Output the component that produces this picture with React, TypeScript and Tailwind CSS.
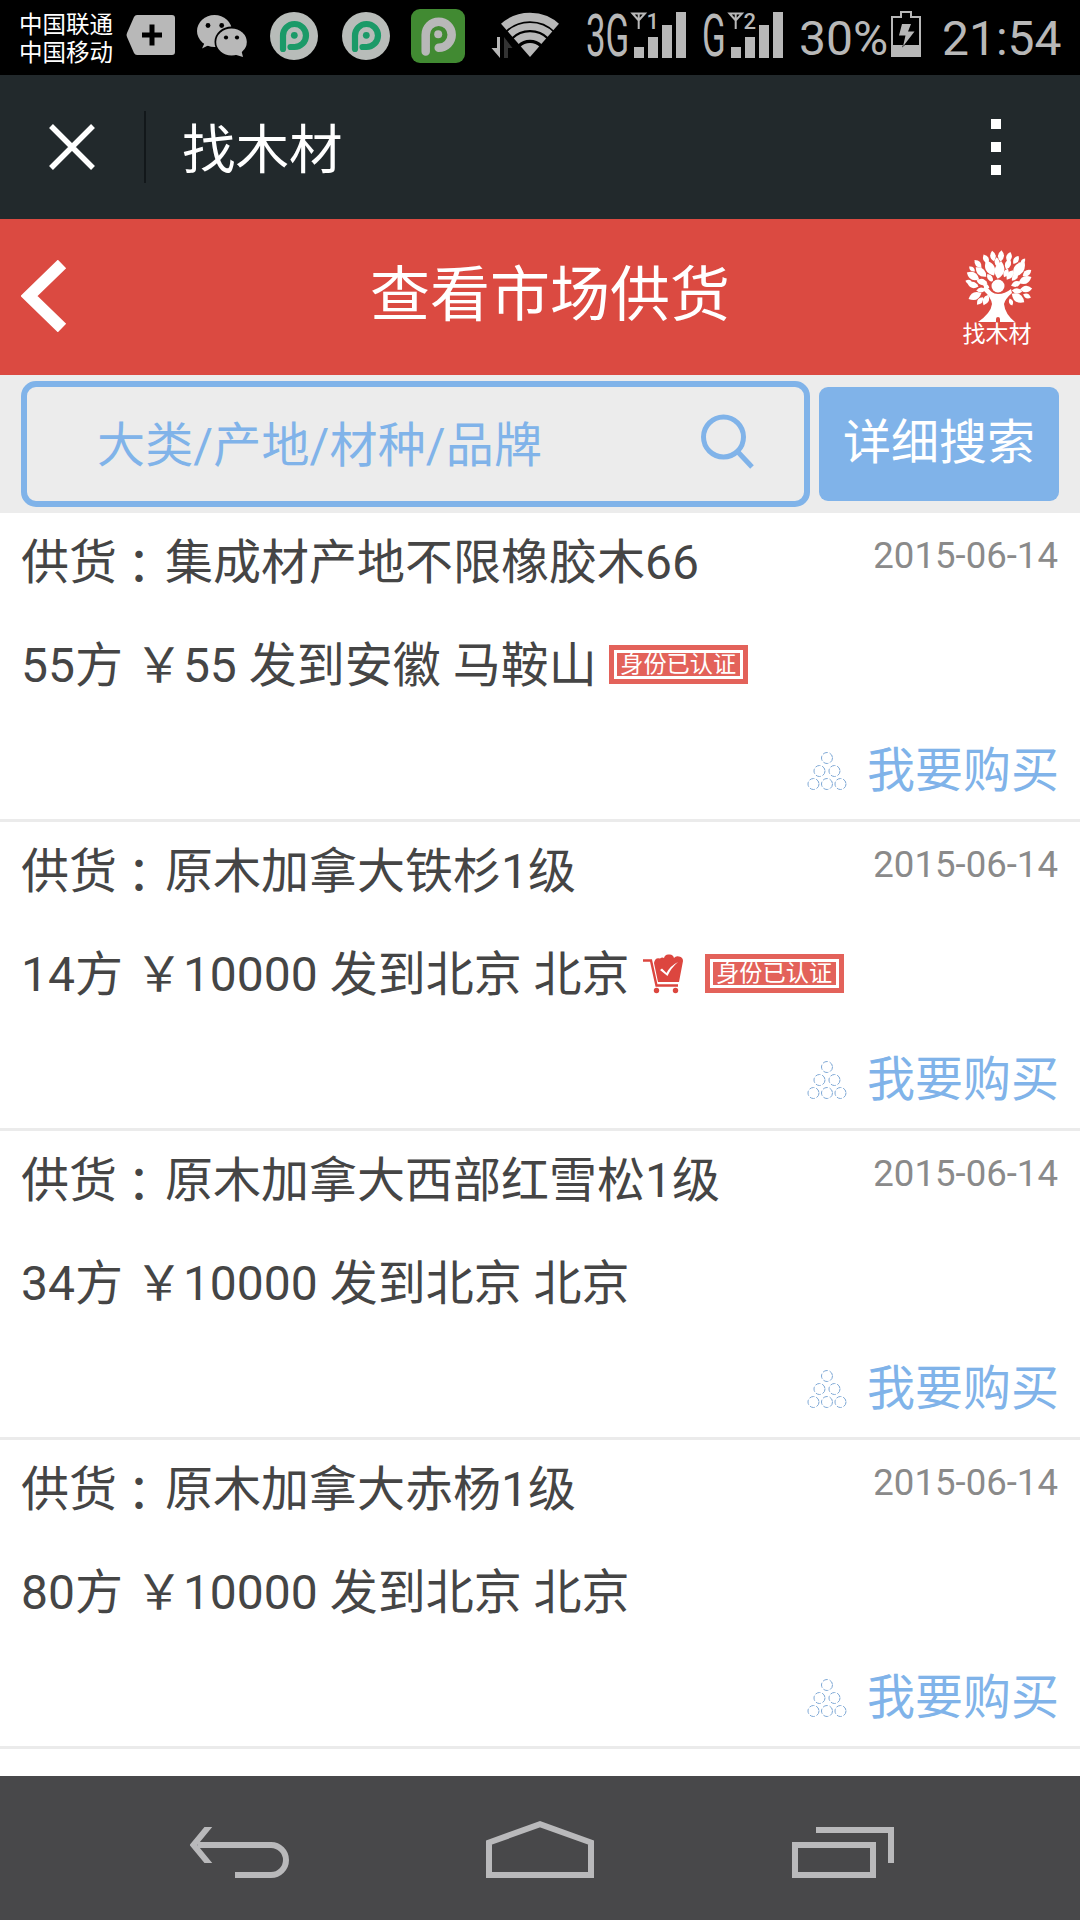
import React from "react";

type Supply = {
  title: string;
  volume: string;
  price: string;
  place: string;
  cart?: boolean;
  verified?: boolean;
};

const supplies: Supply[] = [
  { title: "集成材产地不限橡胶木66", volume: "55方", price: "55", place: "发到安徽 马鞍山", verified: true },
  { title: "原木加拿大铁杉1级", volume: "14方", price: "10000", place: "发到北京 北京", cart: true, verified: true },
  { title: "原木加拿大西部红雪松1级", volume: "34方", price: "10000", place: "发到北京 北京" },
  { title: "原木加拿大赤杨1级", volume: "80方", price: "10000", place: "发到北京 北京" },
];

function TagPlus() {
  return (
    <svg width="50" height="42" viewBox="0 0 50 42" className="ml-[11px]">
      <path d="M11 1H46a3 3 0 0 1 3 3V38a3 3 0 0 1-3 3H11Q9 41 8 39L1 23Q0 21 1 19L8 3Q9 1 11 1Z" fill="#b8b8b8" />
      <path d="M26 10.500V31.500M16 21H36" stroke="#000" strokeWidth="5" />
    </svg>
  );
}

function WeChat() {
  return (
    <svg width="52" height="44" viewBox="0 0 52 44" className="ml-[20px]">
      <g fill="#b8b8b8">
        <ellipse cx="18.500" cy="17" rx="17.500" ry="16" />
        <path d="M9 28 6 34.500 15 30Z" />
        <ellipse cx="35.500" cy="28" rx="17" ry="15.500" fill="#000" />
        <ellipse cx="35.500" cy="28" rx="15.300" ry="13.500" />
        <path d="M37 40 47 43 45 35Z" />
      </g>
      <g fill="#000">
        <circle cx="12" cy="11.500" r="2.400" />
        <circle cx="25.700" cy="11.500" r="2.400" />
        <circle cx="30" cy="23.500" r="2.100" />
        <circle cx="41" cy="23.500" r="2.100" />
      </g>
    </svg>
  );
}

function PCircle() {
  return (
    <svg width="48" height="48" viewBox="0 0 48 48">
      <circle cx="24" cy="24" r="24" fill="#b8bcb9" />
      <path d="M13 37V23.500A11.500 11.500 0 1 1 24.500 35H20.500" fill="none" stroke="#1b9a68" strokeWidth="6.200" strokeLinecap="round" />
      <circle cx="24.300" cy="23.300" r="3.400" fill="#1b9a68" />
    </svg>
  );
}

function PSquare() {
  return (
    <svg width="54" height="54" viewBox="0 0 54 54" className="ml-[21px]">
      <rect width="54" height="54" rx="9" fill="#418a32" />
      <path d="M14.700 42.500V25.700A13 13 0 1 1 27.700 38.700" fill="none" stroke="#b8b8b8" strokeWidth="8.500" strokeLinecap="round" />
      <circle cx="27.200" cy="25.200" r="4" fill="#b8b8b8" />
    </svg>
  );
}

function Wifi() {
  return (
    <svg width="70" height="46" viewBox="0 0 70 46" className="ml-[26px]">
      <defs>
        <clipPath id="fan">
          <path d="M39 45 8.500 10 0-1V-10H78V-1L69.500 10Z" />
        </clipPath>
      </defs>
      <g clipPath="url(#fan)" fill="none" stroke="#b8b8b8">
        <circle cx="39" cy="45" r="40" strokeWidth="8.500" />
        <circle cx="39" cy="45" r="30.500" strokeWidth="7" />
        <circle cx="39" cy="45" r="21" strokeWidth="7.500" />
        <circle cx="39" cy="45" r="7" strokeWidth="14" />
      </g>
      <path d="M6 25H9V46L.500 36H6Z" fill="#b8b8b8" />
      <path d="M13 46V25L21.500 36H17V46Z" fill="#333" />
    </svg>
  );
}

function Signal({ label, slot, width }: { label: string; slot: string; width: number }) {
  return (
    <div className="flex h-[48px] items-start">
      <div className="h-[48px]" style={{ width }}>
        <div className="-mt-[8px] w-max origin-left scale-x-[0.58] text-[60px] leading-[68px]">{label}</div>
      </div>
      <svg width="58" height="48" viewBox="0 0 58 48" overflow="visible">
        <path d="M3.500 3.500H16L9.700 10.500ZM9.700 3V19" fill="none" stroke="#b8b8b8" strokeWidth="2" />
        <g fill="#b8b8b8">
          <text x="17.500" y="19" fontSize="22" fontWeight="500">
            {slot}
          </text>
          <rect x="5" y="37" width="10" height="11" />
          <rect x="19" y="27" width="10" height="21" />
          <rect x="33" y="15" width="10" height="33" />
          <rect x="47" y="2" width="10" height="46" />
        </g>
      </svg>
    </div>
  );
}

function Battery() {
  return (
    <svg width="30" height="46" viewBox="0 0 30 46" className="ml-[3px]">
      <path d="M1 45V6H10V1H20V6H29V45Z" fill="none" stroke="#b8b8b8" strokeWidth="2" />
      <path d="M0 34H12L11 36.500 14 34H30V46H0Z" fill="#b8b8b8" />
      <path d="M11 13H20L17 20.500H23.500L12 35.500 14.500 24.500H8Z" fill="#b8b8b8" />
    </svg>
  );
}

function StatusBar() {
  return (
    <div className="flex h-[75px] items-start bg-black text-[#b8b8b8]">
      <div className="ml-[19px] mt-[11px] w-[96px] text-[23.5px] leading-[28px] text-white">
        <div>中国联通</div>
        <div>中国移动</div>
      </div>
      <div className="mt-[14px]">
        <TagPlus />
      </div>
      <div className="mt-[14px]">
        <WeChat />
      </div>
      <div className="ml-[22px] mt-[12px] flex gap-6">
        <PCircle />
        <PCircle />
      </div>
      <div className="mt-[9px]">
        <PSquare />
      </div>
      <div className="mt-[12px]">
        <Wifi />
      </div>
      <div className="ml-[25px] mt-[10px] flex gap-[15px]">
        <Signal label="3G" slot="1" width={43} />
        <Signal label="G" slot="2" width={24} />
      </div>
      <span className="ml-[15px] mt-[10px] w-[91px] text-[48px] leading-[58px]">30%</span>
      <div className="-ml-[2px] mt-[11px]">
        <Battery />
      </div>
      <span className="ml-[21px] mt-[10px] text-[48px] leading-[58px]">21:54</span>
    </div>
  );
}

// Each leaf: centre x, centre y, rotation in degrees, half length.
const leaves: [number, number, number, number][] = [
  [35, 5, 5, 6], [27, 5, -10, 5.500], [43, 6, 15, 5.500], [20, 8, -28, 5.500], [50, 9, 32, 5],
  [24, 17, -28, 9], [33.500, 19, 12, 9.500], [42, 13, 20, 6], [53, 18, 35, 10], [12, 13, -42, 5.500],
  [15, 21, -48, 7.500], [7, 25, -60, 7.500], [16, 31, -75, 6], [7, 34, -75, 6], [9, 45, -115, 7.500],
  [20, 49, -155, 6], [24, 27, -35, 5], [44, 24, 35, 6], [61, 22, 55, 5.500], [59, 29, 65, 7.500],
  [50, 33, 70, 5.500], [60, 38, 85, 6.500], [52, 47, 125, 8], [45, 51, 160, 4], [3, 31, -70, 4], [14, 50, -140, 5],
  [40, 22, 25, 5], [57, 10, 40, 3.500], [15, 39, -95, 5], [31, 11, -5, 5], [6, 18, -50, 4], [51, 40, 95, 5.500],
  [61, 45, 115, 4.500], [49, 26, 40, 5], [20, 35, -60, 4],
];

function Logo() {
  return (
    <div className="flex w-[72px] flex-col items-center">
      <svg width="66" height="72" viewBox="0 0 66 72" overflow="visible" className="ml-[3px]">
        <g fill="#fff">
          {leaves.map(([x, y, a, s]) => (
            <path
              key={`${x}-${y}`}
              d="M0-1Q1.200 0 0 1Q-1.200 0 0-1Z"
              transform={`translate(${x} ${y}) rotate(${a}) scale(${s * 0.85} ${s * 0.95})`}
            />
          ))}
          <circle cx="32" cy="36" r="8" fill="#db4a41" />
          <circle cx="32" cy="35" r="6.500" />
          <path d="M19 33Q25 43 32 43Q39 43 45 38L46 42Q39 48 38 53Q39 63 49 71H34V68a2 2 0 0 0-4 0V71H12Q25 62 26 53Q25 46 17 39Z" />
        </g>
      </svg>
      <span className="text-[23px] leading-[23px] text-white">找木材</span>
    </div>
  );
}

function LogPile() {
  const circles = [[20, 7], [12.500, 20], [27.500, 20], [6.500, 33], [20, 33], [33.500, 33]];
  return (
    <svg width="40" height="40" viewBox="0 0 40 40">
      {circles.map(([x, y]) => (
        <circle key={`${x}-${y}`} cx={x} cy={y} r="5.500" fill="none" stroke="#7fa9d6" strokeWidth="1" strokeDasharray="5.200 1.800" />
      ))}
    </svg>
  );
}

function Cart() {
  return (
    <svg width="40" height="40" viewBox="0 0 40 40" className="-mt-[3px] ml-[13px]">
      <path d="M0 6.500H8L13.500 31.500H35" fill="none" stroke="#dc463f" strokeWidth="2.400" />
      <path d="M11 9Q12 3 17 4.500Q19 3 21 4Q22 0 26 0.500Q30 0 31 4Q33 1.500 36 2.500Q40 3 40 7L36 28H15Z" fill="#dc463f" />
      <path d="M17 16 19 14.500 23.500 19Q27 12 35 8Q28 14 24.500 22Z" fill="#fff" />
      <circle cx="13.500" cy="36.500" r="2.700" fill="#dc463f" />
      <circle cx="32.500" cy="36.500" r="2.700" fill="#dc463f" />
    </svg>
  );
}

function Verified({ afterCart }: { afterCart?: boolean }) {
  return (
    <div className={afterCart ? "-mt-[3px] ml-[22px] bg-[#e3625a] p-[5px]" : "-mt-[3px] ml-[12px] bg-[#e3625a] p-[5px]"}>
      <div className="flex h-[29px] w-[129px] justify-center whitespace-nowrap border-3 border-white text-[23.2px] leading-[23px] text-white">
        身份已认证
      </div>
    </div>
  );
}

function SupplyItem({ item }: { item: Supply }) {
  return (
    <article className="flex h-[309px] flex-col border-b-3 border-[#ebebeb] pl-[21px] pr-[22px] pt-[16px] text-[#454545]">
      <div className="flex h-[60px] justify-between">
        <h2 className="whitespace-nowrap text-[48px] leading-[59px]">
          供货<span className="relative -left-[2px] top-[5px] font-['Noto_Sans_CJK_TC']">：</span>
          {item.title}
        </h2>
        <time className="mt-[5px] text-[36.6px] leading-[43px] text-[#8a8a8a]">2015-06-14</time>
      </div>
      <div className="mt-[47px] flex h-[60px] items-center whitespace-nowrap text-[48px] leading-[60px]">
        <span>
          {item.volume} ￥{item.price} {item.place}
        </span>
        {item.cart && <Cart />}
        {item.verified && <Verified afterCart={item.cart} />}
      </div>
      <div className="mt-[45px] flex h-[60px] items-center justify-end text-[48px] leading-[60px] text-[#80b3e9]">
        <LogPile />
        <span className="-mr-[1px] ml-[20px]">我要购买</span>
      </div>
    </article>
  );
}

export default function App() {
  return (
    <div className="flex h-[1920px] w-[1080px] flex-col overflow-hidden bg-white font-[Roboto,'Noto_Sans_CJK_SC',sans-serif]">
      <StatusBar />
      <header className="flex h-[144px] items-center bg-[#22292c] text-white">
        <svg width="46" height="46" viewBox="0 0 46 46" className="ml-[49px]">
          <path d="M2 2 44 44M44 2 2 44" stroke="#fff" strokeWidth="5.500" />
        </svg>
        <div className="ml-[49px] h-[72px] w-[2px] bg-[#12171a]" />
        <h1 className="ml-[36px] flex-1 pt-[7px] text-[53.5px] leading-[70px]">找木材</h1>
        <div className="mr-[79px] flex flex-col gap-[13px]">
          <i className="size-[10px] bg-white" />
          <i className="size-[10px] bg-white" />
          <i className="size-[10px] bg-white" />
        </div>
      </header>
      <div className="flex h-[156px] items-center bg-[#db4a41] pb-[2px] text-white">
        <svg width="46" height="72" viewBox="0 0 46 72" className="ml-[21px]">
          <path d="M41 4 8 36 41 68" fill="none" stroke="#fff" strokeWidth="12" />
        </svg>
        <h2 className="ml-[303px] flex-1 whitespace-nowrap text-[60px] leading-[70px]">查看市场供货</h2>
        <div className="mr-[47px] pt-[4px]">
          <Logo />
        </div>
      </div>
      <div className="flex h-[138px] items-center bg-[#ececec] pl-[21px]">
        <div className="flex h-[126px] w-[789px] items-center justify-between rounded-[15px] border-6 border-[#80b3e9] pl-[70px] pr-[49px]">
          <span className="pt-[4px] text-[48px] leading-[60px] tracking-[0.15px] text-[#80b3e9]">大类/产地/材种/品牌</span>
          <svg width="56" height="56" viewBox="0 0 56 56" className="-mt-[6px]">
            <circle cx="24.500" cy="24" r="20" fill="none" stroke="#80b3e9" strokeWidth="5" />
            <path d="M38.500 38.500 53 54" stroke="#80b3e9" strokeWidth="5" />
          </svg>
        </div>
        <button className="ml-[9px] h-[114px] w-[240px] rounded-[9px] bg-[#80b3e9] pb-[2px] text-[48px] leading-[60px] text-white">详细搜索</button>
      </div>
      <main className="h-[1263px] overflow-hidden">
        {supplies.map((s) => (
          <SupplyItem key={s.title} item={s} />
        ))}
      </main>
      <nav className="flex h-[144px] shrink-0 items-start bg-[#48484a]">
        <svg width="100" height="54" viewBox="0 0 100 54" className="ml-[190px] mt-[49px]" fill="none" stroke="#b9b9bb" strokeWidth="6">
          <path d="M8 20H81a15 15 0 0 1 0 30H45" />
          <path d="M20 0 3.500 20 20 40" clipPath="url(#tip)" />
          <clipPath id="tip">
            <rect x="-2" y="2" width="30" height="36" />
          </clipPath>
        </svg>
        <svg width="108" height="57" viewBox="0 0 108 57" className="ml-[196px] mt-[45px]" fill="none" stroke="#b9b9bb" strokeWidth="6">
          <path d="M3 54V21.500L54 3.200 105 21.500V54Z" />
        </svg>
        <svg width="102" height="51" viewBox="0 0 102 51" className="ml-[198px] mt-[51px]" fill="none" stroke="#b9b9bb" strokeWidth="6">
          <path d="M3 18H81V48H3ZM24 3H99V36" />
        </svg>
      </nav>
    </div>
  );
}
